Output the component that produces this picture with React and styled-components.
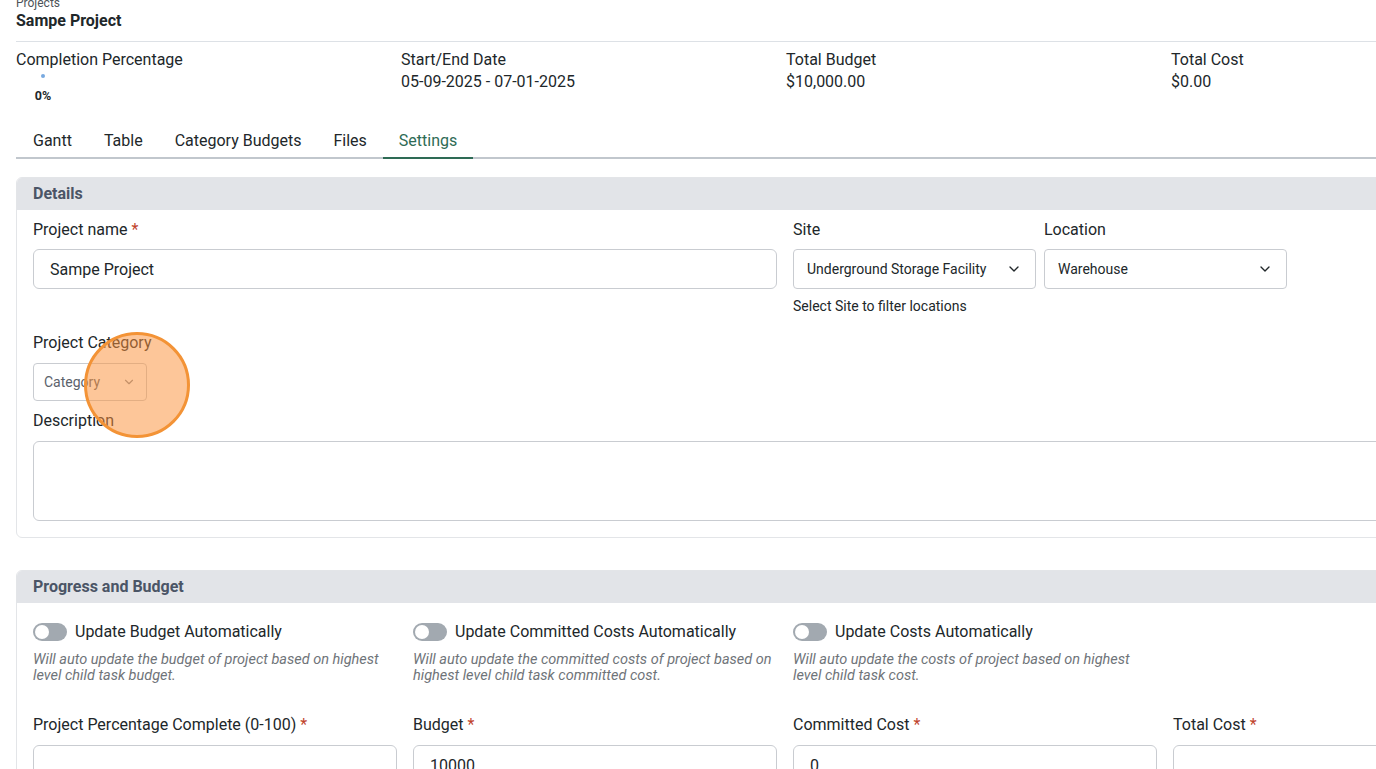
import React from 'react';
import styled, { createGlobalStyle } from 'styled-components';
import { ChevronDown } from 'lucide-react';

const GlobalStyle = createGlobalStyle`
  html, body {
    margin: 0;
    padding: 0;
    background: #ffffff;
    overflow: hidden;
  }
  body {
    font-family: Roboto, "Noto Sans", sans-serif;
    color: #21272a;
  }
  * { box-sizing: border-box; }
`;

const Page = styled.div`
  position: relative;
  width: 1540px;
  margin-left: 16px;
`;

const Header = styled.div`
  border-bottom: 1px solid #dde1e6;
  padding-bottom: 10px;
`;

const Breadcrumb = styled.div`
  margin-top: -4px;
  font-size: 12px;
  line-height: 14px;
  color: #4d5358;
`;

const Title = styled.h1`
  margin: 1px 0 0;
  font-size: 16px;
  line-height: 20px;
  font-weight: 700;
  color: #21272a;
`;

const Summary = styled.div`
  display: grid;
  grid-template-columns: repeat(4, 385px);
  height: 77px;
  padding-top: 7px;
`;

const Stat = styled.div`
  display: flex;
  flex-direction: column;
`;

const StatLabel = styled.div`
  font-size: 16px;
  line-height: 22px;
`;

const StatValue = styled.div`
  font-size: 16px;
  line-height: 22px;
`;

const Ring = styled.div`
  width: 54px;
  display: flex;
  flex-direction: column;
  align-items: center;
  padding-top: 3px;
`;

const Dot = styled.span`
  width: 4px;
  height: 4px;
  border-radius: 50%;
  background: #78a9e0;
`;

const Percent = styled.span`
  margin-top: 11px;
  font-size: 12.5px;
  font-weight: 700;
  line-height: 14px;
`;

const Tabs = styled.div`
  display: flex;
  border-bottom: 2px solid #c1c7cd;
  padding-left: 1px;
`;

const Tab = styled.div`
  padding: 11px 16px 5px;
  font-size: 16px;
  line-height: 22px;
  color: ${p => (p.$active ? '#2e6b55' : '#21272a')};
  border-bottom: 2px solid ${p => (p.$active ? '#2e6b55' : 'transparent')};
  margin-bottom: -2px;
`;

const Card = styled.section`
  border: 1px solid #e3e5e8;
  border-radius: 6px;
  overflow: hidden;
  margin-top: ${p => p.$top}px;
`;

const CardHead = styled.div`
  height: 32px;
  padding: 0 16px 1px;
  display: flex;
  align-items: center;
  background: #e2e4e8;
  font-size: 16px;
  font-weight: 700;
  color: #4b5566;
`;

const CardBody = styled.div`
  padding: ${p => p.$top}px 16px 16px;
  display: flex;
  flex-direction: column;
`;

const Row = styled.div`
  display: flex;
  align-items: flex-start;
  margin-top: ${p => p.$top || 0}px;
`;

const Field = styled.div`
  display: flex;
  flex-direction: column;
  width: ${p => (p.$w ? `${p.$w}px` : 'auto')};
  flex: ${p => (p.$w ? 'none' : 1)};
  margin-left: ${p => p.$ml || 0}px;
`;

const Label = styled.label`
  font-size: 16px;
  line-height: 20px;
  margin-bottom: ${p => p.$gap ?? 10}px;
  color: #21272a;
  white-space: nowrap;
`;

const Req = styled.span`
  color: #c0432c;
  margin-left: 4px;
`;

const Input = styled.div`
  height: 40px;
  border: 1px solid #c9ccd1;
  border-radius: 6px;
  padding: 0 16px;
  display: flex;
  align-items: center;
  font-size: 16px;
  color: #21272a;
  background: #fff;
`;

const Select = styled.div`
  height: ${p => p.$h || 40}px;
  border: 1px solid #c9ccd1;
  border-radius: 4px;
  padding: 0 ${p => p.$pad || 13}px;
  display: flex;
  align-items: center;
  justify-content: space-between;
  font-size: 14px;
  color: ${p => (p.$muted ? '#5b626b' : '#21272a')};
  background: #fff;
  white-space: nowrap;
  svg { color: ${p => (p.$muted ? '#8a9099' : '#21272a')}; flex: none; }
`;

const Helper = styled.div`
  margin-top: 7px;
  font-size: 14px;
  line-height: 20px;
  color: #21272a;
`;

const TextArea = styled.div`
  height: 80px;
  border: 1px solid #c9ccd1;
  border-radius: 6px;
`;

const Grid = styled.div`
  display: grid;
  grid-template-columns: repeat(4, 364px);
  column-gap: 16px;
  margin-top: ${p => p.$top || 0}px;
`;

const ToggleLine = styled.div`
  display: flex;
  align-items: center;
  gap: 8px;
  font-size: 16px;
  line-height: 24px;
`;

const Track = styled.span`
  width: 34px;
  height: 18px;
  border-radius: 9px;
  background: #a2a9b0;
  position: relative;
  flex: none;
`;

const Knob = styled.span`
  position: absolute;
  left: 2px;
  top: 2px;
  width: 14px;
  height: 14px;
  border-radius: 50%;
  background: #fff;
`;

const Note = styled.div`
  margin-top: 8px;
  font-size: 14.5px;
  line-height: 16px;
  font-style: italic;
  color: #6f7479;
  white-space: nowrap;
`;

const Highlight = styled.div`
  position: absolute;
  left: 68px;
  top: 336px;
  width: 106px;
  height: 106px;
  border-radius: 50%;
  border: 3px solid #f39336;
  background: rgba(251, 146, 60, 0.52);
  pointer-events: none;
`;

const toggles = [
  { label: 'Update Budget Automatically', note: ['Will auto update the budget of project based on highest', 'level child task budget.'] },
  { label: 'Update Committed Costs Automatically', note: ['Will auto update the committed costs of project based on', 'highest level child task committed cost.'] },
  { label: 'Update Costs Automatically', note: ['Will auto update the costs of project based on highest', 'level child task cost.'] },
];

const amounts = [
  { label: 'Project Percentage Complete (0-100)', value: '' },
  { label: 'Budget', value: '10000' },
  { label: 'Committed Cost', value: '0' },
  { label: 'Total Cost', value: '' },
];

export default function App() {
  return (
    <Page>
      <GlobalStyle />
      <Header>
        <Breadcrumb>Projects</Breadcrumb>
        <Title>Sampe Project</Title>
      </Header>

      <Summary>
        <Stat>
          <StatLabel>Completion Percentage</StatLabel>
          <Ring>
            <Dot />
            <Percent>0%</Percent>
          </Ring>
        </Stat>
        <Stat>
          <StatLabel>Start/End Date</StatLabel>
          <StatValue>05-09-2025 - 07-01-2025</StatValue>
        </Stat>
        <Stat>
          <StatLabel>Total Budget</StatLabel>
          <StatValue>$10,000.00</StatValue>
        </Stat>
        <Stat>
          <StatLabel>Total Cost</StatLabel>
          <StatValue>$0.00</StatValue>
        </Stat>
      </Summary>

      <Tabs>
        <Tab>Gantt</Tab>
        <Tab>Table</Tab>
        <Tab>Category Budgets</Tab>
        <Tab>Files</Tab>
        <Tab $active>Settings</Tab>
      </Tabs>

      <Card $top={18}>
        <CardHead>Details</CardHead>
        <CardBody $top={10}>
          <Row>
            <Field $w={744}>
              <Label $gap={9}>Project name<Req>*</Req></Label>
              <Input>Sampe Project</Input>
            </Field>
            <Field $w={243} $ml={16}>
              <Label $gap={9}>Site</Label>
              <Select>
                Underground Storage Facility
                <ChevronDown size={16} strokeWidth={2} />
              </Select>
              <Helper>Select Site to filter locations</Helper>
            </Field>
            <Field $w={243} $ml={8}>
              <Label $gap={9}>Location</Label>
              <Select>
                Warehouse
                <ChevronDown size={16} strokeWidth={2} />
              </Select>
            </Field>
          </Row>
          <Row $top={17}>
            <Field $w={114}>
              <Label>Project Category</Label>
              <Select $h={38} $pad={10} $muted>
                Category
                <ChevronDown size={14} strokeWidth={2} />
              </Select>
            </Field>
          </Row>
          <Row $top={10}>
            <Field>
              <Label>Description</Label>
              <TextArea />
            </Field>
          </Row>
        </CardBody>
      </Card>

      <Card $top={32}>
        <CardHead>Progress and Budget</CardHead>
        <CardBody $top={17}>
          <Grid>
            {toggles.map(t => (
              <div key={t.label}>
                <ToggleLine>
                  <Track><Knob /></Track>
                  {t.label}
                </ToggleLine>
                <Note>{t.note[0]}<br />{t.note[1]}</Note>
              </div>
            ))}
          </Grid>
          <Grid $top={31}>
            {amounts.map(a => (
              <Field key={a.label}>
                <Label>{a.label}<Req>*</Req></Label>
                <Input>{a.value}</Input>
              </Field>
            ))}
          </Grid>
        </CardBody>
      </Card>

      <Highlight />
    </Page>
  );
}
